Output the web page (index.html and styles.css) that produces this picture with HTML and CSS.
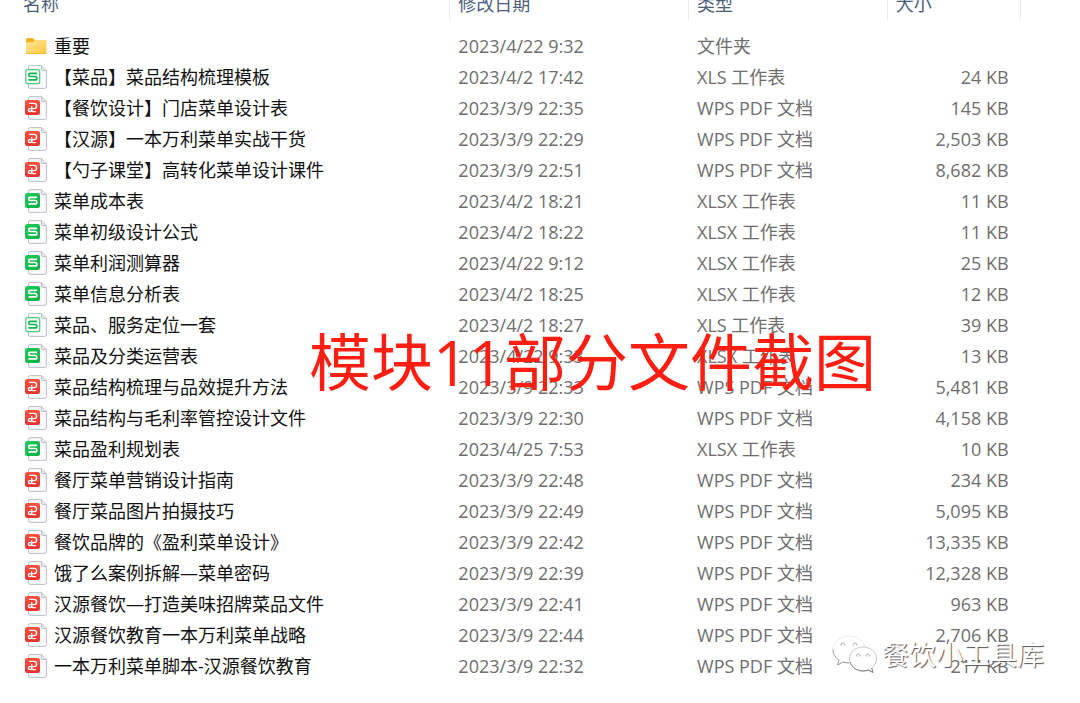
FILE: index.html
```html
<!DOCTYPE html>
<html lang="zh-CN">
<head>
    <meta charset="UTF-8">
    <meta name="viewport" content="width=device-width, initial-scale=1.0">
    <title>模块11部分文件截图</title>
    <link rel="stylesheet" href="styles.css">
</head>
<body>
    <!-- Icon definitions -->
    <svg class="icon-defs" aria-hidden="true">
        <defs>
            <linearGradient id="folder-fill" x1="0" y1="0" x2="1" y2="1">
                <stop offset="0" stop-color="#ffe49a"/>
                <stop offset="1" stop-color="#fdc93f"/>
            </linearGradient>
            <linearGradient id="red-fill" x1="0" y1="0" x2="0" y2="1">
                <stop offset="0" stop-color="#fb5140"/>
                <stop offset="1" stop-color="#e5332f"/>
            </linearGradient>
            <linearGradient id="green-fill" x1="0" y1="0" x2="1" y2="1">
                <stop offset="0" stop-color="#20cb5a"/>
                <stop offset="1" stop-color="#0fae45"/>
            </linearGradient>
            <symbol id="page" viewBox="0 0 22 24">
                <path d="M5 .6h11.500l4.900 4.900v16.400q0 1.500-1.500 1.500H5q-1.500 0-1.500-1.500V2.100Q3.500.6 5 .6z" fill="#fafafc" stroke="#b4b8c2" stroke-width=".9"/>
                <path d="M16.500.8v3.500q0 1.200 1.200 1.200h3.500" fill="#e6e8ee" stroke="#b4b8c2" stroke-width=".9"/>
            </symbol>
            <symbol id="folder" viewBox="0 0 22 24">
                <path d="M1 5.500Q1 4 2.500 4h5.200l2 2.200V9H1z" fill="#f5b21a"/>
                <path d="M1 8.200h7L10.300 6h10.200q1 0 1 1v12q0 1-1 1H2q-1 0-1-1z" fill="url(#folder-fill)"/>
                <path d="M1.200 19.500h20" stroke="#eeb63a" stroke-width=".8"/>
            </symbol>
            <symbol id="xls" viewBox="0 0 22 24">
                <use href="#page"/>
                <rect x=".7" y="4.700" width="14" height="14" rx="2" fill="#f3fdf6" stroke="#4cc97b" stroke-width="1.200"/>
                <path d="M12 8.400H5.200q-1.500 0-1.500 1.500t1.500 1.600h5q1.600 0 1.600 1.700t-1.600 1.700H3.500" fill="none" stroke="#18b452" stroke-width="1.700"/>
            </symbol>
            <symbol id="xlsx" viewBox="0 0 22 24">
                <use href="#page"/>
                <rect x="0" y="4" width="15" height="15" rx="2.200" fill="url(#green-fill)"/>
                <path d="M12 8.400H5.200q-1.500 0-1.500 1.500t1.500 1.600h5q1.600 0 1.600 1.700t-1.600 1.700H3.500" fill="none" stroke="#fff" stroke-width="1.700"/>
            </symbol>
            <symbol id="pdf" viewBox="0 0 22 24">
                <use href="#page"/>
                <rect x="0" y="4" width="15" height="15" rx="2.200" fill="url(#red-fill)"/>
                <path d="M4.800 7.400h4.200a2.600 2.600 0 0 1 0 5.200H4.900a1.500 1.500 0 1 0 0 3h.3q1.500 0 1.500-1.500v-3.300M6.700 14.800q.5.800 1.600.8h2.200" fill="none" stroke="#fff" stroke-width="1.400" stroke-linecap="round"/>
            </symbol>
        </defs>
    </svg>

    <main class="explorer">
        <table class="file-list">
            <colgroup>
                <col class="col-name">
                <col class="col-date">
                <col class="col-type">
                <col class="col-size">
                <col>
            </colgroup>
            <thead>
                <tr><th>名称</th><th>修改日期</th><th>类型</th><th>大小</th><th></th></tr>
            </thead>
            <tbody>
                <tr><td><svg class="icon"><use href="#folder"/></svg>重要</td><td>2023/4/22 9:32</td><td>文件夹</td><td></td><td></td></tr>
                <tr><td><svg class="icon"><use href="#xls"/></svg>【菜品】菜品结构梳理模板</td><td>2023/4/2 17:42</td><td>XLS 工作表</td><td>24 KB</td><td></td></tr>
                <tr><td><svg class="icon"><use href="#pdf"/></svg>【餐饮设计】门店菜单设计表</td><td>2023/3/9 22:35</td><td>WPS PDF 文档</td><td>145 KB</td><td></td></tr>
                <tr><td><svg class="icon"><use href="#pdf"/></svg>【汉源】一本万利菜单实战干货</td><td>2023/3/9 22:29</td><td>WPS PDF 文档</td><td>2,503 KB</td><td></td></tr>
                <tr><td><svg class="icon"><use href="#pdf"/></svg>【勺子课堂】高转化菜单设计课件</td><td>2023/3/9 22:51</td><td>WPS PDF 文档</td><td>8,682 KB</td><td></td></tr>
                <tr><td><svg class="icon"><use href="#xlsx"/></svg>菜单成本表</td><td>2023/4/2 18:21</td><td>XLSX 工作表</td><td>11 KB</td><td></td></tr>
                <tr><td><svg class="icon"><use href="#xlsx"/></svg>菜单初级设计公式</td><td>2023/4/2 18:22</td><td>XLSX 工作表</td><td>11 KB</td><td></td></tr>
                <tr><td><svg class="icon"><use href="#xlsx"/></svg>菜单利润测算器</td><td>2023/4/22 9:12</td><td>XLSX 工作表</td><td>25 KB</td><td></td></tr>
                <tr><td><svg class="icon"><use href="#xlsx"/></svg>菜单信息分析表</td><td>2023/4/2 18:25</td><td>XLSX 工作表</td><td>12 KB</td><td></td></tr>
                <tr><td><svg class="icon"><use href="#xls"/></svg>菜品、服务定位一套</td><td>2023/4/2 18:27</td><td>XLS 工作表</td><td>39 KB</td><td></td></tr>
                <tr><td><svg class="icon"><use href="#xlsx"/></svg>菜品及分类运营表</td><td>2023/4/22 9:33</td><td>XLSX 工作表</td><td>13 KB</td><td></td></tr>
                <tr><td><svg class="icon"><use href="#pdf"/></svg>菜品结构梳理与品效提升方法</td><td>2023/3/9 22:33</td><td>WPS PDF 文档</td><td>5,481 KB</td><td></td></tr>
                <tr><td><svg class="icon"><use href="#pdf"/></svg>菜品结构与毛利率管控设计文件</td><td>2023/3/9 22:30</td><td>WPS PDF 文档</td><td>4,158 KB</td><td></td></tr>
                <tr><td><svg class="icon"><use href="#xlsx"/></svg>菜品盈利规划表</td><td>2023/4/25 7:53</td><td>XLSX 工作表</td><td>10 KB</td><td></td></tr>
                <tr><td><svg class="icon"><use href="#pdf"/></svg>餐厅菜单营销设计指南</td><td>2023/3/9 22:48</td><td>WPS PDF 文档</td><td>234 KB</td><td></td></tr>
                <tr><td><svg class="icon"><use href="#pdf"/></svg>餐厅菜品图片拍摄技巧</td><td>2023/3/9 22:49</td><td>WPS PDF 文档</td><td>5,095 KB</td><td></td></tr>
                <tr><td><svg class="icon"><use href="#pdf"/></svg>餐饮品牌的《盈利菜单设计》</td><td>2023/3/9 22:42</td><td>WPS PDF 文档</td><td>13,335 KB</td><td></td></tr>
                <tr><td><svg class="icon"><use href="#pdf"/></svg>饿了么案例拆解—菜单密码</td><td>2023/3/9 22:39</td><td>WPS PDF 文档</td><td>12,328 KB</td><td></td></tr>
                <tr><td><svg class="icon"><use href="#pdf"/></svg>汉源餐饮—打造美味招牌菜品文件</td><td>2023/3/9 22:41</td><td>WPS PDF 文档</td><td>963 KB</td><td></td></tr>
                <tr><td><svg class="icon"><use href="#pdf"/></svg>汉源餐饮教育一本万利菜单战略</td><td>2023/3/9 22:44</td><td>WPS PDF 文档</td><td>2,706 KB</td><td></td></tr>
                <tr><td><svg class="icon"><use href="#pdf"/></svg>一本万利菜单脚本-汉源餐饮教育</td><td>2023/3/9 22:32</td><td>WPS PDF 文档</td><td>217 KB</td><td></td></tr>
            </tbody>
        </table>

        <!-- Text laid over the list -->
        <p class="overlay-title">模块11部分文件截图</p>

        <div class="watermark">
            <svg class="wechat" viewBox="0 0 46 40" aria-hidden="true">
                <g fill="#fff" stroke-linejoin="round">
                    <path d="M17 1C8 1 1 7 1 14.500c0 4.500 2.300 8 6 10.500l-1.500 5 5.500-3c2 .6 4 .9 6 .9 9 0 16-6 16-13.400S26 1 17 1z" stroke="#e6e6e6" stroke-width=".8"/>
                    <path d="M1 14.500c0 4.500 2.300 8 6 10.500l-1.500 5 5.500-3c2 .6 4 .9 6 .9" fill="none" stroke="#a0a0a0" stroke-width="1"/>
                    <path d="M31 12c-7.500 0-13.500 5.200-13.500 12S23.500 36 31 36c2 0 3.700-.4 5.300-1l4.700 2.500-1.300-4.500c3-2.200 4.800-5.200 4.800-9C44.500 17.200 38.500 12 31 12z" stroke="#bbb" stroke-width=".8"/>
                    <path d="M18 27c2 5.500 7 9 13 9 2 0 3.700-.4 5.300-1l4.700 2.500-1.300-4.500" fill="none" stroke="#808080" stroke-width="1"/>
                </g>
                <g fill="none" stroke="#999" stroke-width=".9">
                    <path d="M9.200 10.500a1.800 1.800 0 1 1 3.200 0"/>
                    <path d="M21.200 10.500a1.800 1.800 0 1 1 3.200 0"/>
                    <path d="M24.700 21.500a1.700 1.700 0 1 1 3 0"/>
                    <path d="M34.200 21.500a1.700 1.700 0 1 1 3 0"/>
                </g>
            </svg>
            <span>餐饮小工具库</span>
        </div>
    </main>
</body>
</html>
```
FILE: styles.css
```css
/* Basic styling */
* { box-sizing: border-box; margin: 0; padding: 0; }
body { background-color: #ffffff; color: #6e6e6e; font-family: "Open Sans", "Noto Sans CJK SC", sans-serif; font-size: 18px; line-height: 24px; }
.icon-defs { position: absolute; width: 0; height: 0; }
.explorer { position: relative; height: 100vh; overflow: hidden; }

/* File list, header partly scrolled out of view */
.file-list { width: 100%; margin-top: -13px; table-layout: fixed; border-collapse: separate; border-spacing: 0; white-space: nowrap; }
.col-name { width: 41.7%; }
.col-date { width: 22.1%; }
.col-type { width: 18.4%; }
.col-size { width: 12.3%; }

.file-list th { height: 34px; padding-left: 8px; border-right: 1px solid #ebebeb; color: #4c607a; font-weight: normal; text-align: left; }
.file-list th:first-child { padding-left: 23px; }
.file-list th:last-child { border-right: none; }

.file-list tbody::before { content: ""; display: block; height: 9px; }
.file-list td { height: 31px; padding-left: 8px; }
.file-list td:first-child { padding-left: 25px; color: #111111; }
.file-list td:nth-child(4) { padding-right: 12px; text-align: right; }

.icon { width: 22px; height: 24px; margin-right: 7px; vertical-align: top; }

/* Overlays */
.overlay-title { position: absolute; top: 324px; left: 309px; color: #ff1e12; font-size: 62px; line-height: 76px; white-space: nowrap; }
.watermark { position: absolute; right: 36px; bottom: 28px; display: flex; align-items: center; gap: 4px; color: #ffffff; font-size: 27px; line-height: 40px; text-shadow: 1px 1px 1px #555555; }
.wechat { width: 46px; height: 40px; }
```
